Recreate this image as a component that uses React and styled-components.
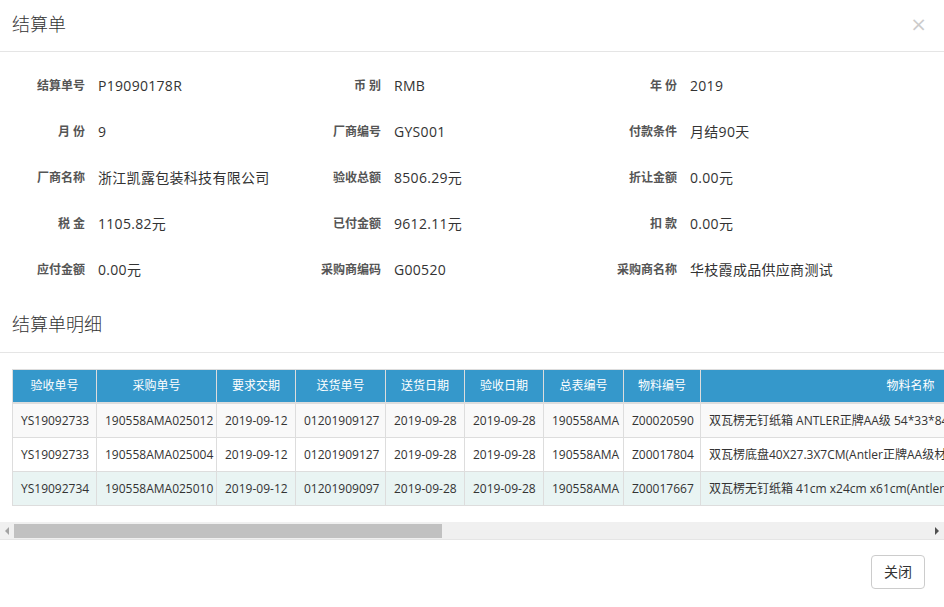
import React from "react";
import styled, { createGlobalStyle } from "styled-components";

const GlobalStyle = createGlobalStyle`
  html, body {
    margin: 0;
    padding: 0;
    background: #fff;
  }
  body {
    font-family: "Open Sans", "Noto Sans CJK SC", sans-serif;
    color: #333;
    font-size: 14px;
    overflow: hidden;
  }
  * {
    box-sizing: border-box;
  }
`;

const Modal = styled.div`
  width: 944px;
  height: 607px;
  background: #fff;
  display: flex;
  flex-direction: column;
`;

const ModalHeader = styled.div`
  display: flex;
  align-items: center;
  justify-content: space-between;
  padding: 13px 15px 16px 12px;
  border-bottom: 1px solid #e5e5e5;
`;

const ModalTitle = styled.h4`
  margin: 0;
  font-size: 18px;
  line-height: 22px;
  font-weight: 300;
  color: #333;
`;

const CloseButton = styled.button`
  border: none;
  background: transparent;
  padding: 0;
  margin-right: 2px;
  font-family: "DejaVu Sans", sans-serif;
  font-size: 20px;
  font-weight: 400;
  line-height: 1;
  color: #000;
  opacity: 0.2;
  cursor: pointer;
`;

const InfoGrid = styled.div`
  display: grid;
  grid-template-columns: repeat(3, 296px);
  grid-auto-rows: 46px;
  padding-top: 10px;
`;

const Field = styled.div`
  display: flex;
  align-items: center;
`;

const FieldLabel = styled.label`
  width: 85px;
  text-align: right;
  font-size: 12px;
  font-weight: 700;
  color: #555;
  white-space: pre;
`;

const FieldValue = styled.span`
  margin-left: 13px;
  font-size: 14px;
  color: #333;
  white-space: nowrap;
  letter-spacing: 0.3px;
`;

const SectionTitle = styled.h4`
  margin: 0;
  padding: 20px 12px 16px;
  font-size: 18px;
  line-height: 24px;
  font-weight: 300;
  color: #333;
  border-bottom: 1px solid #e5e5e5;
`;

const TableViewport = styled.div`
  overflow: hidden;
  padding: 16px 0 16px 12px;
`;

const Table = styled.table`
  border-collapse: collapse;
  table-layout: fixed;
  width: 1996px;
  border: 1px solid #ddd;
  font-size: 12px;
`;

const HeadCell = styled.th`
  background: #3598cb;
  color: #fff;
  font-weight: 400;
  text-align: center;
  padding: 8px;
  line-height: 16px;
  border: 1px solid #ddd;
  border-bottom-width: 2px;
  white-space: nowrap;
`;

const Row = styled.tr`
  background: ${(p) => p.$bg};
`;

const Cell = styled.td`
  padding: 8px;
  line-height: 17px;
  border: 1px solid #ddd;
  color: #333;
  text-align: ${(p) => (p.$left ? "left" : "center")};
  white-space: nowrap;
  overflow: hidden;
`;

const ScrollBar = styled.div`
  display: flex;
  height: 17px;
  background: #f0f0f0;
`;

const ScrollArrow = styled.div`
  width: 14px;
  display: flex;
  align-items: center;
  justify-content: center;

  &::before {
    content: "";
    width: 0;
    height: 0;
    border-top: 4px solid transparent;
    border-bottom: 4px solid transparent;
    ${(p) =>
      p.$dir === "left"
        ? "border-right: 4px solid #a3a3a3;"
        : "border-left: 4px solid #505050;"}
  }
`;

const ScrollTrack = styled.div`
  flex: 1;
  padding: 2px 0 1px;
`;

const ScrollThumb = styled.div`
  height: 100%;
  background: #c1c1c1;
`;

const ModalFooter = styled.div`
  display: flex;
  justify-content: flex-end;
  padding: 15px 19px;
  border-top: 1px solid #e5e5e5;
`;

const Button = styled.button`
  font-family: "Open Sans", "Noto Sans CJK SC", sans-serif;
  font-size: 14px;
  line-height: 20px;
  padding: 6px 12px;
  color: #333;
  background: #fff;
  border: 1px solid #ccc;
  border-radius: 4px;
  cursor: pointer;
`;

const fields = [
  ["结算单号", "P19090178R"],
  ["币 别", "RMB"],
  ["年 份", "2019"],
  ["月 份", "9"],
  ["厂商编号", "GYS001"],
  ["付款条件", "月结90天"],
  ["厂商名称", "浙江凯露包装科技有限公司"],
  ["验收总额", "8506.29元"],
  ["折让金额", "0.00元"],
  ["税 金", "1105.82元"],
  ["已付金额", "9612.11元"],
  ["扣 款", "0.00元"],
  ["应付金额", "0.00元"],
  ["采购商编码", "G00520"],
  ["采购商名称", "华枝霞成品供应商测试"],
];

const columns = [
  { title: "验收单号", width: 84 },
  { title: "采购单号", width: 120 },
  { title: "要求交期", width: 79 },
  { title: "送货单号", width: 90 },
  { title: "送货日期", width: 79 },
  { title: "验收日期", width: 79 },
  { title: "总表编号", width: 80 },
  { title: "物料编号", width: 77 },
  { title: "物料名称", width: 420, left: true },
  { title: "单位", width: 70 },
  { title: "验收数量", width: 90 },
  { title: "含税单价", width: 100 },
  { title: "不含税单价", width: 100 },
  { title: "税率", width: 80 },
  { title: "税额", width: 100 },
  { title: "价税合计", width: 110 },
  { title: "备注", width: 238 },
];

const rows = [
  {
    bg: "#f9f9f9",
    cells: [
      "YS19092733", "190558AMA025012", "2019-09-12", "01201909127", "2019-09-28",
      "2019-09-28", "190558AMA", "Z00020590",
      "双瓦楞无钉纸箱 ANTLER正牌AA级 54*33*84cm",
      "个", "500", "6.80", "5.86", "16%", "469.00", "3400.00", "",
    ],
  },
  {
    bg: "#fff",
    cells: [
      "YS19092733", "190558AMA025004", "2019-09-12", "01201909127", "2019-09-28",
      "2019-09-28", "190558AMA", "Z00017804",
      "双瓦楞底盘40X27.3X7CM(Antler正牌AA级材质)",
      "个", "1000", "1.20", "1.03", "16%", "165.52", "1200.00", "",
    ],
  },
  {
    bg: "#e9f4f3",
    cells: [
      "YS19092734", "190558AMA025010", "2019-09-12", "01201909097", "2019-09-28",
      "2019-09-28", "190558AMA", "Z00017667",
      "双瓦楞无钉纸箱 41cm x24cm x61cm(Antler正牌AA级材质)",
      "个", "800", "6.15", "5.30", "16%", "471.30", "4906.29", "",
    ],
  },
];

// visible part of the table vs its full scroll width
const thumbRatio = 944 / 2020;

const App = () => {
  return (
    <Modal>
      <GlobalStyle />
      <ModalHeader>
        <ModalTitle>结算单</ModalTitle>
        <CloseButton>×</CloseButton>
      </ModalHeader>

      <InfoGrid>
        {fields.map(([label, value]) => (
          <Field key={label}>
            <FieldLabel>{label}</FieldLabel>
            <FieldValue>{value}</FieldValue>
          </Field>
        ))}
      </InfoGrid>

      <SectionTitle>结算单明细</SectionTitle>

      <TableViewport>
        <Table>
          <colgroup>
            {columns.map((c) => (
              <col key={c.title} style={{ width: c.width }} />
            ))}
          </colgroup>
          <thead>
            <tr>
              {columns.map((c) => (
                <HeadCell key={c.title}>{c.title}</HeadCell>
              ))}
            </tr>
          </thead>
          <tbody>
            {rows.map((row, i) => (
              <Row key={i} $bg={row.bg}>
                {row.cells.map((v, j) => (
                  <Cell key={j} $left={columns[j].left}>
                    {v}
                  </Cell>
                ))}
              </Row>
            ))}
          </tbody>
        </Table>
      </TableViewport>

      <ScrollBar>
        <ScrollArrow $dir="left" />
        <ScrollTrack>
          <ScrollThumb style={{ width: `${thumbRatio * 100}%` }} />
        </ScrollTrack>
        <ScrollArrow $dir="right" />
      </ScrollBar>

      <ModalFooter>
        <Button>关闭</Button>
      </ModalFooter>
    </Modal>
  );
};

export default App;
